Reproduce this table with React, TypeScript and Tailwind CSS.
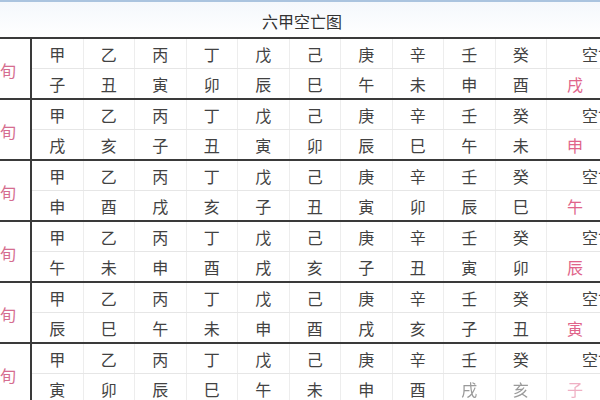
const stems = ['甲', '乙', '丙', '丁', '戊', '己', '庚', '辛', '壬', '癸'];

const xun = [
  { name: '甲子旬', branches: '子丑寅卯辰巳午未申酉', empty: '戌亥' },
  { name: '甲戌旬', branches: '戌亥子丑寅卯辰巳午未', empty: '申酉' },
  { name: '甲申旬', branches: '申酉戌亥子丑寅卯辰巳', empty: '午未' },
  { name: '甲午旬', branches: '午未申酉戌亥子丑寅卯', empty: '辰巳' },
  { name: '甲辰旬', branches: '辰巳午未申酉戌亥子丑', empty: '寅卯' },
  { name: '甲寅旬', branches: '寅卯辰巳午未申酉戌亥', empty: '子丑' },
];

const font = { fontFamily: '"Noto Sans CJK SC", "Noto Sans", sans-serif' };

function Block({ row, last }: { row: (typeof xun)[number]; last: boolean }) {
  const branches = row.branches.split('');
  return (
    <div className="flex border-b-2 border-[#3a3a3a]">
      {/* label */}
      <div className="w-[32px] shrink-0 flex items-center justify-end pr-[14px] pt-[2px] overflow-hidden border-r-2 border-[#3a3a3a] text-[16px] text-[#d56d8f] whitespace-nowrap">
        {row.name}
      </div>

      <div className="flex-1 flex flex-col">
        {/* stems */}
        <div className="h-[30px] flex border-b border-[#e6e6e6]">
          {stems.map((s) => (
            <div key={s} className="w-[51.5px] shrink-0 flex items-center justify-center border-r border-[#ededed]">
              {s}
            </div>
          ))}
          <div className="flex-1 flex items-center pl-[35px] whitespace-nowrap">空亡</div>
        </div>

        {/* branches */}
        <div className="h-[29px] flex">
          {branches.map((b, i) => (
            <div
              key={i}
              className={`w-[51.5px] shrink-0 flex items-center justify-center border-r border-[#ededed] ${
                last && i >= 8 ? 'text-[#9a9a9a] blur-[0.6px]' : ''
              }`}
            >
              {b}
            </div>
          ))}
          <div
            className={`flex-1 flex items-center pl-[20px] gap-[20px] whitespace-nowrap text-[#e0648a] ${
              last ? 'opacity-50 blur-[0.6px]' : ''
            }`}
          >
            {row.empty.split('').map((c) => (
              <span key={c}>{c}</span>
            ))}
          </div>
        </div>
      </div>
    </div>
  );
}

export default function App() {
  return (
    <div className="w-[600px] h-[400px] overflow-hidden bg-white text-[#424242] text-[16px]" style={font}>
      <div className="h-[39px] border-t-2 border-[#aac4df] border-b-2 border-b-[#3a3a3a] bg-gradient-to-b from-[#f4f8fc] to-white flex items-center justify-center pt-[3px]">
        <span className="text-[16px] text-[#333] pl-[4px]">六甲空亡图</span>
      </div>
      <div className="w-[680px]">
        {xun.map((row, i) => (
          <Block key={row.name} row={row} last={i === xun.length - 1} />
        ))}
      </div>
    </div>
  );
}
